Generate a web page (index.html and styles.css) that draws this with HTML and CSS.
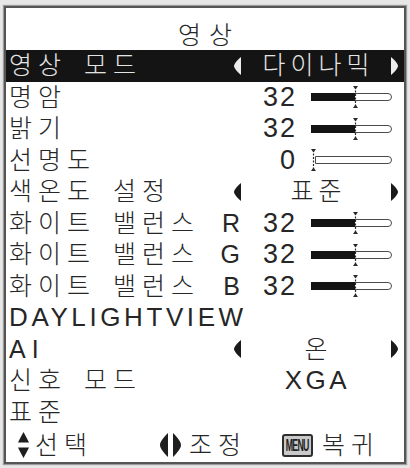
FILE: index.html
```html
<!DOCTYPE html>
<html lang="ko">
<head>
<meta charset="utf-8">
<title>영상</title>
<link rel="stylesheet" href="styles.css">
</head>
<body>
<div class="osd">
  <div class="title">영상</div>

  <div class="row sel">
    <span class="label">영상 모드</span>
    <span class="enum">
      <svg class="arr" width="7" height="18" viewBox="0 0 7 18"><path d="M7 0 C3 3.5 0 7 0 9 C0 11 3 14.5 7 18 Z"/></svg>
      <span class="val">다이나믹</span>
      <svg class="arr" width="7" height="18" viewBox="0 0 7 18"><path d="M0 0 C4 3.5 7 7 7 9 C7 11 4 14.5 0 18 Z"/></svg>
    </span>
  </div>

  <div class="row">
    <span class="label">명암</span>
    <span class="num"><span class="n">32</span>
      <svg class="sl" width="81" height="24" viewBox="0 0 81 24"><path class="trk" d="M0.5 8.5 H77 A3.5 3.5 0 0 1 77 15.5 H0.5 Z"/><rect class="fil" x="0" y="8" width="44" height="8"/><line class="mk" x1="44.5" y1="2" x2="44.5" y2="22"/><path class="tip" d="M42 1 H47 L44.5 4.5 Z M42 23 H47 L44.5 19.5 Z"/></svg>
    </span>
  </div>

  <div class="row">
    <span class="label">밝기</span>
    <span class="num"><span class="n">32</span>
      <svg class="sl" width="81" height="24" viewBox="0 0 81 24"><path class="trk" d="M0.5 8.5 H77 A3.5 3.5 0 0 1 77 15.5 H0.5 Z"/><rect class="fil" x="0" y="8" width="44" height="8"/><line class="mk" x1="44.5" y1="2" x2="44.5" y2="22"/><path class="tip" d="M42 1 H47 L44.5 4.5 Z M42 23 H47 L44.5 19.5 Z"/></svg>
    </span>
  </div>

  <div class="row">
    <span class="label">선명도</span>
    <span class="num"><span class="n">0</span>
      <svg class="sl" width="81" height="24" viewBox="0 0 81 24"><path class="trk" d="M4.5 8.5 H77 A3.5 3.5 0 0 1 77 15.5 H4.5 Z"/><line class="mk" x1="2.5" y1="2" x2="2.5" y2="22"/><path class="tip" d="M0 1 H5 L2.5 4.5 Z M0 23 H5 L2.5 19.5 Z"/></svg>
    </span>
  </div>

  <div class="row">
    <span class="label">색온도 설정</span>
    <span class="enum">
      <svg class="arr" width="7" height="18" viewBox="0 0 7 18"><path d="M7 0 C3 3.5 0 7 0 9 C0 11 3 14.5 7 18 Z"/></svg>
      <span class="val">표준</span>
      <svg class="arr" width="7" height="18" viewBox="0 0 7 18"><path d="M0 0 C4 3.5 7 7 7 9 C7 11 4 14.5 0 18 Z"/></svg>
    </span>
  </div>

  <div class="row">
    <span class="label">화이트 밸런스<span class="ch">R</span></span>
    <span class="num"><span class="n">32</span>
      <svg class="sl" width="81" height="24" viewBox="0 0 81 24"><path class="trk" d="M0.5 8.5 H77 A3.5 3.5 0 0 1 77 15.5 H0.5 Z"/><rect class="fil" x="0" y="8" width="44" height="8"/><line class="mk" x1="44.5" y1="2" x2="44.5" y2="22"/><path class="tip" d="M42 1 H47 L44.5 4.5 Z M42 23 H47 L44.5 19.5 Z"/></svg>
    </span>
  </div>

  <div class="row">
    <span class="label">화이트 밸런스<span class="ch">G</span></span>
    <span class="num"><span class="n">32</span>
      <svg class="sl" width="81" height="24" viewBox="0 0 81 24"><path class="trk" d="M0.5 8.5 H77 A3.5 3.5 0 0 1 77 15.5 H0.5 Z"/><rect class="fil" x="0" y="8" width="44" height="8"/><line class="mk" x1="44.5" y1="2" x2="44.5" y2="22"/><path class="tip" d="M42 1 H47 L44.5 4.5 Z M42 23 H47 L44.5 19.5 Z"/></svg>
    </span>
  </div>

  <div class="row">
    <span class="label">화이트 밸런스<span class="ch">B</span></span>
    <span class="num"><span class="n">32</span>
      <svg class="sl" width="81" height="24" viewBox="0 0 81 24"><path class="trk" d="M0.5 8.5 H77 A3.5 3.5 0 0 1 77 15.5 H0.5 Z"/><rect class="fil" x="0" y="8" width="44" height="8"/><line class="mk" x1="44.5" y1="2" x2="44.5" y2="22"/><path class="tip" d="M42 1 H47 L44.5 4.5 Z M42 23 H47 L44.5 19.5 Z"/></svg>
    </span>
  </div>

  <div class="row">
    <span class="label lat">DAYLIGHTVIEW</span>
  </div>

  <div class="row">
    <span class="label">AI</span>
    <span class="enum">
      <svg class="arr" width="7" height="18" viewBox="0 0 7 18"><path d="M7 0 C3 3.5 0 7 0 9 C0 11 3 14.5 7 18 Z"/></svg>
      <span class="val">온</span>
      <svg class="arr" width="7" height="18" viewBox="0 0 7 18"><path d="M0 0 C4 3.5 7 7 7 9 C7 11 4 14.5 0 18 Z"/></svg>
    </span>
  </div>

  <div class="row">
    <span class="label">신호 모드</span>
    <span class="enum">
      <span class="gap"></span>
      <span class="val lat">XGA</span>
      <span class="gap"></span>
    </span>
  </div>

  <div class="row">
    <span class="label">표준</span>
  </div>

  <div class="foot">
    <span class="item">
      <svg width="11" height="26" viewBox="0 0 11 26"><path d="M5.5 0 C7 3 9 6 11 10.5 H0 C2 6 4 3 5.5 0 Z M0 15.5 H11 C9 20 7 23 5.5 26 C4 23 2 20 0 15.5 Z"/></svg>
      <span class="txt">선택</span>
    </span>
    <span class="item">
      <svg width="21" height="24" viewBox="0 0 21 24"><path d="M8 0 C3 5 0 9 0 12 C0 15 3 19 8 24 Z M13 0 C18 5 21 9 21 12 C21 15 18 19 13 24 Z"/></svg>
      <span class="txt">조정</span>
    </span>
    <span class="item">
      <span class="menu"><span class="mtxt">MENU</span></span>
      <span class="txt">복귀</span>
    </span>
  </div>
</div>
</body>
</html>
```

FILE: styles.css
```css
html, body {
  margin: 0;
  padding: 0;
}

body {
  background: #e7e7e7;
  font-family: "Liberation Sans", "Noto Sans CJK KR", sans-serif;
  font-weight: 300;
  color: #262626;
  width: 410px;
  height: 468px;
  overflow: hidden;
}

.osd {
  box-sizing: border-box;
  margin: 6px 0 0 4px;
  width: 402px;
  height: 458px;
  border: 2px solid #555;
  box-shadow: 0 0 1px 1px #9c9c9c;
  background: #fff;
  display: flex;
  flex-direction: column;
}

.title {
  height: 42px;
  box-sizing: border-box;
  padding-top: 12px;
  line-height: 30px;
  font-size: 25px;
  letter-spacing: 8px;
  text-align: center;
  text-indent: 8px;
}

.row {
  height: 31.5px;
  display: flex;
  align-items: center;
  justify-content: space-between;
  padding-left: 3px;
  font-size: 25px;
  line-height: 31.5px;
}

.row.sel {
  background: #141414;
  color: #e4e4e4;
}

.label {
  display: flex;
  flex: 1;
  letter-spacing: 6px;
  word-spacing: 4px;
  white-space: pre;
}

.label.lat {
  font-size: 26px;
  letter-spacing: 3.6px;
}

.ch {
  margin-left: auto;
  margin-right: 17px;
}

.enum {
  box-sizing: border-box;
  width: 175px;
  display: flex;
  align-items: center;
  padding: 0 6px 0 5px;
}

.arr {
  display: block;
  fill: #1a1a1a;
  flex: none;
}

.sel .arr {
  fill: #ececec;
}

.gap {
  width: 7px;
  flex: none;
}

.val {
  flex: 1;
  text-align: center;
  letter-spacing: 5px;
  padding-left: 5px;
}

.val.lat {
  font-size: 26px;
  letter-spacing: 3.5px;
  padding-left: 3px;
}

.num {
  display: flex;
  align-items: center;
  margin-right: 12px;
}

.n {
  font-size: 27px;
  letter-spacing: 2px;
  margin-right: 14px;
}

.sl {
  display: block;
}

.trk {
  fill: #fff;
  stroke: #4a4a4a;
  stroke-width: 1;
}

.fil {
  fill: #141414;
}

.mk {
  stroke: #2a2a2a;
  stroke-width: 1.2;
  stroke-dasharray: 2 1.5;
}

.tip {
  fill: #2a2a2a;
}

.foot {
  height: 34px;
  display: grid;
  grid-template-columns: 142px 122px auto;
  align-items: center;
  padding-left: 12px;
  font-size: 25px;
  line-height: 30px;
}

.item {
  display: flex;
  align-items: center;
}

.item svg {
  display: block;
  fill: #1e1e1e;
  flex: none;
}

.item .txt {
  letter-spacing: 6px;
  margin-left: 6px;
}

.item:nth-child(2) .txt {
  margin-left: 8px;
}

.menu {
  box-sizing: border-box;
  width: 31px;
  height: 23px;
  border: 2px solid #2e2e2e;
  border-radius: 3px;
  background: #c9c9c9;
  display: flex;
  align-items: center;
  justify-content: center;
  overflow: hidden;
  flex: none;
}

.mtxt {
  font-family: "Liberation Sans", sans-serif;
  font-weight: bold;
  font-size: 11px;
  line-height: 11px;
  letter-spacing: -1px;
  color: #222;
  transform: scale(0.8, 1.5);
}

.item:nth-child(3) .txt {
  margin-left: 9px;
}
```
